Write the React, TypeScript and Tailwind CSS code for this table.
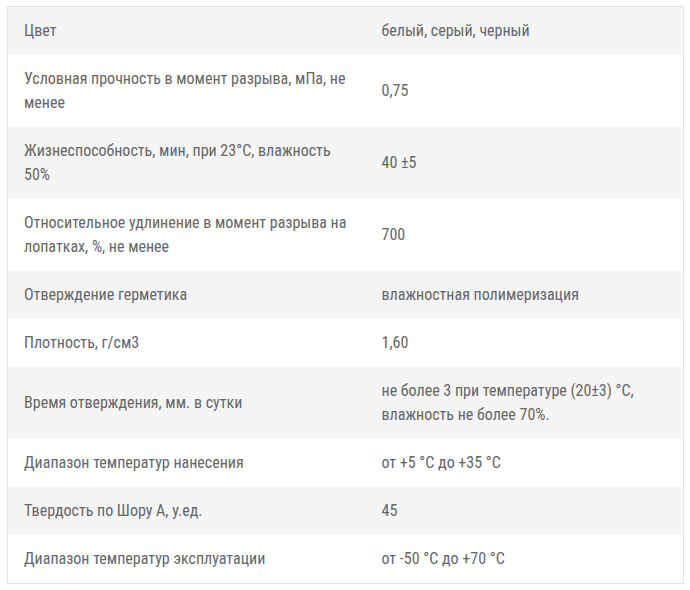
const rows: [string, string][] = [
  ["Цвет", "белый, серый, черный"],
  ["Условная прочность в момент разрыва, мПа, не менее", "0,75"],
  ["Жизнеспособность, мин, при 23°С, влажность 50%", "40 ±5"],
  ["Относительное удлинение в момент разрыва на лопатках, %, не менее", "700"],
  ["Отверждение герметика", "влажностная полимеризация"],
  ["Плотность, г/см3", "1,60"],
  ["Время отверждения, мм. в сутки", "не более 3 при температуре (20±3) °С, влажность не более 70%."],
  ["Диапазон температур нанесения", "от +5 °С до +35 °С"],
  ["Твердость по Шору А, у.ед.", "45"],
  ["Диапазон температур эксплуатации", "от -50 °С до +70 °С"],
];

export default function App() {
  return (
    <div className="pl-[7px] pt-[6px] font-['Roboto_Condensed',Roboto,sans-serif] text-[16px] leading-6 text-[#666]">
      <table className="w-[677px] border-collapse border border-[#e3e3e3]">
        <tbody>
          {rows.map(([name, value], i) => (
            <tr key={name} className={i % 2 === 0 ? "bg-[#f5f5f5]" : "bg-white"}>
              <td className="w-[358px] py-3 px-4 align-middle">{name}</td>
              <td className="py-3 px-4 align-middle">{value}</td>
            </tr>
          ))}
        </tbody>
      </table>
    </div>
  );
}
